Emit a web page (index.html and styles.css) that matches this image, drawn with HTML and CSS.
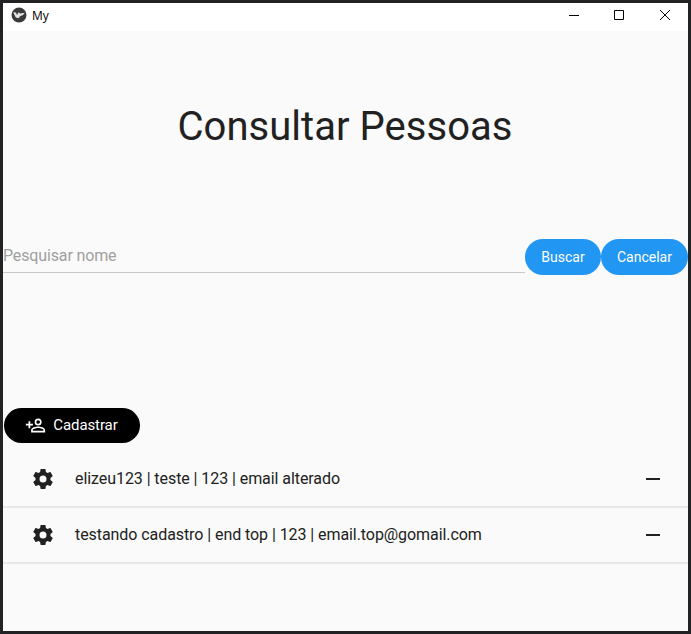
FILE: index.html
```html
<!DOCTYPE html>
<html lang="pt">
<head>
<meta charset="utf-8">
<title>My</title>
<link rel="stylesheet" href="styles.css">
</head>
<body>
<svg class="defs" width="0" height="0">
  <symbol id="cog" viewBox="0 0 24 24"><path d="M12,15.5A3.5,3.5 0 0,1 8.5,12A3.5,3.5 0 0,1 12,8.5A3.5,3.5 0 0,1 15.5,12A3.5,3.5 0 0,1 12,15.5M19.43,12.97C19.47,12.65 19.5,12.33 19.5,12C19.5,11.67 19.47,11.34 19.43,11L21.54,9.37C21.73,9.22 21.78,8.95 21.66,8.73L19.66,5.27C19.54,5.05 19.27,4.96 19.05,5.05L16.56,6.05C16.04,5.66 15.5,5.32 14.87,5.07L14.5,2.42C14.46,2.18 14.25,2 14,2H10C9.75,2 9.54,2.18 9.5,2.42L9.13,5.07C8.5,5.32 7.96,5.66 7.44,6.05L4.95,5.05C4.73,4.96 4.46,5.05 4.34,5.27L2.34,8.73C2.21,8.95 2.27,9.22 2.46,9.37L4.57,11C4.53,11.34 4.5,11.67 4.5,12C4.5,12.33 4.53,12.65 4.57,12.97L2.46,14.63C2.27,14.78 2.21,15.05 2.34,15.27L4.34,18.73C4.46,18.95 4.73,19.03 4.95,18.95L7.44,17.94C7.96,18.34 8.5,18.68 9.13,18.93L9.5,21.58C9.54,21.82 9.75,22 10,22H14C14.25,22 14.46,21.82 14.5,21.58L14.87,18.93C15.5,18.67 16.04,18.34 16.56,17.94L19.05,18.95C19.27,19.03 19.54,18.95 19.66,18.73L21.66,15.27C21.78,15.05 21.73,14.78 21.54,14.63L19.43,12.97Z"/></symbol>
</svg>
<div class="window">
  <header class="titlebar">
    <svg class="logo" viewBox="0 0 16 16"><circle cx="8" cy="8" r="7.5" fill="#3b3b3b"/><path d="M2.2 5.2L5 5.6L6 8L7.6 5.2L9.2 6.6L13.8 5.8L11.8 8.2L9.4 9L7.4 11.2L4.8 10.6Z" fill="#e4e4e4"/></svg>
    <span class="caption">My</span>
    <svg class="ctl" viewBox="0 0 46 28"><path d="M18 12.5H28"/></svg>
    <svg class="ctl" viewBox="0 0 46 28"><path d="M17.5 7.5H26.5V16.5H17.5Z"/></svg>
    <svg class="ctl" viewBox="0 0 46 28"><path d="M17 7L27 17M27 7L17 17"/></svg>
  </header>
  <main>
    <h1>Consultar Pessoas</h1>
    <div class="search">
      <input class="field" type="text" placeholder="Pesquisar nome">
      <button class="btn find">Buscar</button>
      <button class="btn cancel">Cancelar</button>
    </div>
    <button class="btn add">
      <svg class="person" viewBox="0 0 24 24"><path d="M15,4A4,4 0 0,0 11,8A4,4 0 0,0 15,12A4,4 0 0,0 19,8A4,4 0 0,0 15,4M15,5.9C16.16,5.9 17.1,6.84 17.1,8C17.1,9.16 16.16,10.1 15,10.1A2.1,2.1 0 0,1 12.9,8A2.1,2.1 0 0,1 15,5.9M4,7V10H1V12H4V15H6V12H9V10H6V7H4M15,13C12.33,13 7,14.33 7,17V20H23V17C23,14.33 17.67,13 15,13M15,14.9C17.97,14.9 21.1,16.36 21.1,17V18.1H8.9V17C8.9,16.36 12,14.9 15,14.9Z"/></svg>
      <span>Cadastrar</span>
    </button>
    <ul class="list">
      <li><svg class="icon"><use href="#cog"/></svg><span class="text">elizeu123 | teste | 123 | email alterado</span><i class="minus"></i></li>
      <li><svg class="icon"><use href="#cog"/></svg><span class="text">testando cadastro | end top | 123 | email.top@gomail.com</span><i class="minus"></i></li>
    </ul>
  </main>
</div>
</body>
</html>
```
FILE: styles.css
```css
* { box-sizing: border-box; }
body { margin: 0; font-family: Roboto, sans-serif; color: #212121; }
.defs { display: block; }
.window { height: 634px; border: 3px solid #212224; background: #fafafa; overflow: hidden; }
.titlebar { display: flex; height: 28px; background: #fff; padding-left: 8px; }
.logo { width: 16px; height: 16px; margin-top: 4px; }
.caption { flex: 1; margin-left: 5px; font: 12px/25px "Open Sans", sans-serif; color: #000; }
.ctl { flex: none; width: 46px; height: 28px; overflow: visible; fill: none; stroke: #000; stroke-width: 1; }
.ctl:last-child { margin-right: -1px; }
h1 { margin: 72px 1px 0 0; height: 48px; font-size: 40px; line-height: 48px; font-weight: 400; letter-spacing: 0.04px; text-align: center; }
.search { display: flex; margin-top: 87px; height: 37px; }
.field { flex: 1; min-width: 0; height: 35px; padding: 0; border: 0; border-bottom: 1px solid #c8c8c8; background: none; font: 16px Roboto, sans-serif; letter-spacing: -0.14px; outline: 0; border-radius: 0; }
.field::placeholder { color: #a0a0a0; opacity: 1; }
.btn { display: flex; align-items: center; justify-content: center; height: 36px; padding: 0; border: 0; border-radius: 18px; font: 14px Roboto, sans-serif; color: #fff; }
.find, .cancel { height: 36px; margin-top: 0.5px; padding-top: 1px; background: #2196f3; }
.find { width: 76px; }
.cancel { width: 87px; }
.add { width: 136px; height: 35px; margin: 132.5px 0 0 0.5px; gap: 7px; background: #000; font-size: 15px; letter-spacing: -0.1px; }
.person { width: 21px; height: 21px; fill: #fff; }
.list { margin: 8.5px 0 0; padding: 0; list-style: none; }
.list li { display: flex; align-items: center; height: 56px; padding: 0 28px 0 27.5px; border-bottom: 2px solid #e8e8e8; font-size: 16px; letter-spacing: -0.07px; }
.list li:first-child { height: 57px; }
.icon { width: 24px; height: 24px; fill: #212121; }
.text { flex: 1; margin-left: 20.5px; line-height: 20px; }
.minus { width: 14px; height: 2px; background: #212121; }
```
